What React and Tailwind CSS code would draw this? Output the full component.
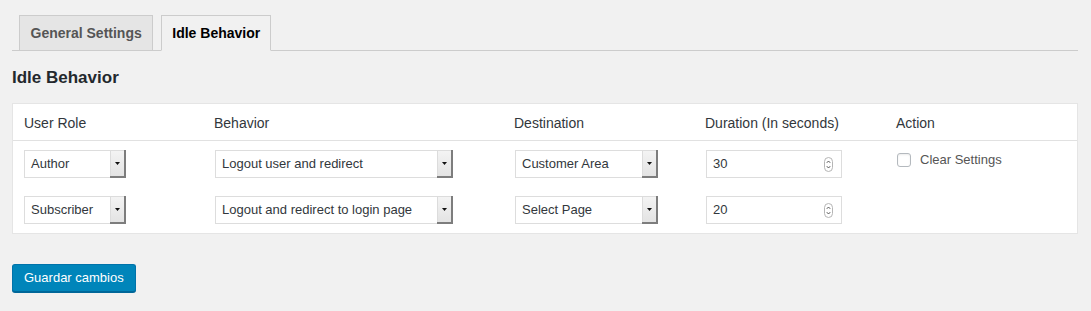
import React from "react";

function Select({ value, width }) {
  return (
    <div
      className="flex h-[28px] items-center border border-[#ddd] bg-white"
      style={{ width }}
    >
      <span className="flex-1 truncate pl-[6px] text-[13px] leading-[26px] text-[#32373c]">
        {value}
      </span>
      <div className="-my-px -mr-px flex h-[28px] w-[16px] items-center justify-center bg-gradient-to-b from-[#f4f4f4] to-[#e2e2e2] pr-[2px] pb-[2px] shadow-[inset_-2px_-2px_0_#7d7d7d,inset_1px_1px_0_#dcdcdc]">
        <svg width="5" height="3" viewBox="0 0 5 3">
          <polygon points="0,0 5,0 2.5,3" fill="#111" />
        </svg>
      </div>
    </div>
  );
}

function NumberInput({ value }) {
  return (
    <div className="flex h-[28px] w-[136px] items-center border border-[#ddd] bg-white pl-[6px] pr-[8px]">
      <span className="flex-1 text-[13px] leading-[26px] text-[#32373c]">{value}</span>
      <svg width="9" height="15" viewBox="0 0 9 15">
        <rect x="0.5" y="0.5" width="8" height="14" rx="4" fill="#fff" stroke="#b5b5b5" />
        <polyline points="2.8,5.8 4.5,4 6.2,5.8" fill="none" stroke="#555" strokeWidth="1" />
        <polyline points="2.8,9.2 4.5,11 6.2,9.2" fill="none" stroke="#555" strokeWidth="1" />
      </svg>
    </div>
  );
}

export default function App() {
  const cols = "grid grid-cols-[190px_300px_191px_191px_1fr]";
  return (
    <div
      className="min-h-[311px] bg-[#f1f1f1] pl-[12px] pr-[13px] pt-[15px]"
      style={{ fontFamily: '"Liberation Sans", Arial, sans-serif' }}
    >
      <div className="flex items-end border-b border-[#ccc]">
        <div className="-mb-px ml-[7px] border border-[#ccc] bg-[#e5e5e5] px-[10.5px] py-[5px] text-[14px] font-bold leading-[24px] text-[#555]">
          General Settings
        </div>
        <div className="-mb-px ml-[8px] border border-[#ccc] border-b-[#f1f1f1] bg-[#f1f1f1] px-[10px] py-[5px] text-[14px] font-bold leading-[24px] text-black">
          Idle Behavior
        </div>
      </div>

      <h2 className="mt-[17px] text-[17px] font-bold leading-[20px] text-[#23282d]">
        Idle Behavior
      </h2>

      <div className="mt-[15px] border border-[#e5e5e5] bg-white">
        <div
          className={`${cols} border-b border-[#e1e1e1] pl-[11px] pt-[9px] pb-[7px] text-[14px] leading-[20px] text-[#32373c]`}
        >
          <div>User Role</div>
          <div>Behavior</div>
          <div>Destination</div>
          <div>Duration (In seconds)</div>
          <div>Action</div>
        </div>

        <div className={`${cols} pl-[11px] pt-[9px] pb-[9px] gap-y-[18px]`}>
          <div>
            <Select value="Author" width={102} />
          </div>
          <div className="pl-px">
            <Select value="Logout user and redirect" width={238} />
          </div>
          <div className="pl-px">
            <Select value="Customer Area" width={143} />
          </div>
          <div className="pl-px">
            <NumberInput value="30" />
          </div>
          <div className="pl-px">
            <div className="flex h-[20px] items-center">
              <span className="h-[14px] w-[14px] rounded-[3px] border border-[#b4b9be] bg-white shadow-[inset_0_1px_2px_rgba(0,0,0,0.08)]" />
              <span className="ml-[9px] text-[13px] leading-[20px] text-[#555]">Clear Settings</span>
            </div>
          </div>

          <div>
            <Select value="Subscriber" width={102} />
          </div>
          <div className="pl-px">
            <Select value="Logout and redirect to login page" width={238} />
          </div>
          <div className="pl-px">
            <Select value="Select Page" width={143} />
          </div>
          <div className="pl-px">
            <NumberInput value="20" />
          </div>
          <div />
        </div>
      </div>

      <button className="mt-[30px] h-[28px] rounded-[3px] border border-[#0073aa] border-b-[#006799] bg-[#0085ba] px-[11px] text-[13px] leading-[26px] text-white shadow-[0_1px_0_#006799]">
        Guardar cambios
      </button>
    </div>
  );
}
